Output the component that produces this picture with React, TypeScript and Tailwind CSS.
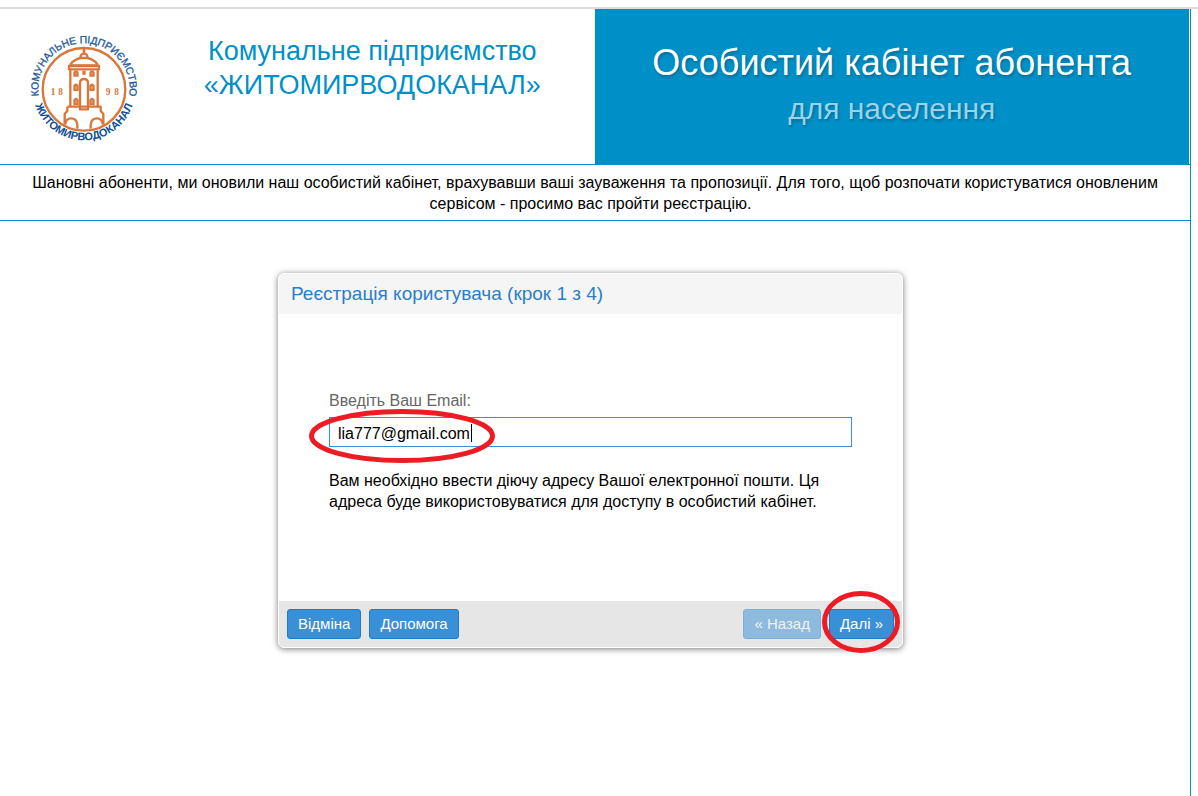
import { useState } from "react";

function Logo() {
  return (
    <svg viewBox="0 0 390 390" className="size-[130px] shrink-0" role="img" aria-label="Житомирводоканал">
      <defs>
        <path id="arc-top" d="M77 281 A137 137 0 1 1 307 281" />
        <path id="arc-bottom" d="M43 168 A154 154 0 1 0 341 168" />
      </defs>
      <circle cx="192" cy="208" r="124" fill="none" stroke="#d9773a" strokeWidth="7" />
      <g fontFamily="'Liberation Sans', Arial, sans-serif" fill="#1f5c9e" textAnchor="middle">
        <text fontSize="31" stroke="#1f5c9e" strokeWidth="1">
          <textPath href="#arc-top" startOffset="50%">КОМУНАЛЬНЕ ПІДПРИЄМСТВО</textPath>
        </text>
        <text fontSize="33" fontWeight="bold" fill="#0f4f96">
          <textPath href="#arc-bottom" startOffset="50%">ЖИТОМИРВОДОКАНАЛ</textPath>
        </text>
      </g>
      <g fill="#d9773a" fontFamily="'Liberation Serif', serif" fontSize="28" fontWeight="bold">
        <text x="92" y="225">1</text>
        <text x="115" y="225">8</text>
        <text x="257" y="225">9</text>
        <text x="283" y="225">8</text>
      </g>
      <g fill="none" stroke="#d9773a" strokeWidth="7" strokeLinejoin="round">
        <path d="M192 86 V102" strokeWidth="8" />
        <path d="M181 116 Q181 101 192 101 Q203 101 203 116" />
        <path d="M151 136 Q154 126 166 120 Q174 116 182 114 H202 Q210 116 218 120 Q230 126 233 136 Z" />
        <path d="M147 138 H237 V148 H147 Z" />
        <path d="M151 148 V262 M233 148 V262" />
        <path d="M142 260 H242 V272 L250 282 V314 M142 260 V272 L134 282 V314" />
        <path d="M180 268 V190 Q180 177 192 177 Q204 177 204 190 V268 Z" />
        <path d="M136 312 Q138 295 153 295 Q170 295 172 314 V326 M248 312 Q246 295 231 295 Q214 295 212 314 V326" />
      </g>
      <g fill="#d9773a">
        <path d="M160 170 v-14 q8 -10 16 0 v14z M208 170 v-14 q8 -10 16 0 v14z M187 152 h10 v12 h-10z" />
        <path d="M160 213 v-17 q8 -11 16 0 v17z M208 213 v-17 q8 -11 16 0 v17z" />
        <path d="M160 256 v-17 q8 -11 16 0 v17z M208 256 v-17 q8 -11 16 0 v17z" />
      </g>
      <path
        d="M168 158 v6 M216 158 v6 M168 198 v9 M216 198 v9 M168 241 v9 M216 241 v9"
        stroke="#eeb48f"
        strokeWidth="3"
      />
    </svg>
  );
}

const buttonBase =
  "h-[30px] rounded-[3px] border border-[#1c7cc9] bg-[#3990d6] px-2.5 text-[15px] leading-7 text-white";

export default function App() {
  const [email, setEmail] = useState("lia777@gmail.com");

  return (
    <div className="min-h-screen bg-white pt-[7px] font-['Liberation_Sans',Arial,sans-serif] text-base leading-[21px] text-black">
      <div className="h-0.5 bg-[#dadce0]" />
      <div className="mr-[7px] min-h-[calc(100vh-9px)] border-r border-[#0090c8]">
        <header className="mr-px flex h-[155px]">
          <div className="flex w-1/2 items-start">
            <div className="pt-[11px] pl-5">
              <Logo />
            </div>
            <h1 className="grow pt-[25px] text-center text-[27px] leading-[34px] text-[#0090c8]">
              Комунальне підприємство
              <br />
              «ЖИТОМИРВОДОКАНАЛ»
            </h1>
          </div>
          <div className="w-1/2 bg-[#0090c8] pt-[30px] text-center text-white [text-shadow:1px_2px_3px_#0004]">
            <h2 className="text-4xl leading-[48px]">Особистий кабінет абонента</h2>
            <p className="text-[30px] leading-[44px] text-[#99d3e9]">для населення</p>
          </div>
        </header>
        <p className="border-y border-[#0090c8] px-5 pt-[7px] pb-1.5 text-center">
          Шановні абоненти, ми оновили наш особистий кабінет, врахувавши ваші зауваження та пропозиції. Для того, щоб
          розпочати користуватися оновленим сервісом - просимо вас пройти реєстрацію.&nbsp;&nbsp;
        </p>
        <main className="pt-[52px] pr-[9px]">
          <form
            className="mx-auto max-w-[625px] rounded-md border border-white bg-white shadow-[0_1px_6px_#0008]"
            onSubmit={(e) => e.preventDefault()}
          >
            <h2 className="rounded-t-[5px] bg-[#f5f5f5] px-3 text-[19px] leading-10 text-[#2a7fcb]">
              Реєстрація користувача (крок 1 з 4)
            </h2>
            <div className="px-[50px] pt-[76px] pb-[89px]">
              <label htmlFor="email" className="block text-[#666]">
                Введіть Ваш Email:
              </label>
              <div className="relative mt-1.5">
                <input
                  id="email"
                  type="email"
                  value={email}
                  onChange={(e) => setEmail(e.target.value)}
                  className="block h-[30px] w-full border border-[#3990d6] px-2 pt-1 text-base outline-none"
                />
                <span className="absolute top-[7px] left-[142px] h-[18px] w-px bg-black" />
                <svg
                  viewBox="0 0 186 54"
                  className="pointer-events-none absolute -top-2 -left-5 h-[54px] w-[186px]"
                  aria-hidden="true"
                >
                  <ellipse cx="93" cy="27" rx="90.5" ry="24.5" fill="none" stroke="#ed1c24" strokeWidth="5" />
                </svg>
              </div>
              <p className="mt-[23px]">
                Вам необхідно ввести діючу адресу Вашої електронної пошти. Ця адреса буде використовуватися для доступу
                в особистий кабінет.
              </p>
            </div>
            <div className="flex items-center gap-2 rounded-b-[5px] bg-[#e6e6e6] p-2">
              <button type="button" className={buttonBase}>
                Відміна
              </button>
              <button type="button" className={buttonBase}>
                Допомога
              </button>
              <button type="button" disabled className={`${buttonBase} ml-auto opacity-50`}>
                « Назад
              </button>
              <div className="relative">
                <button type="submit" className={buttonBase}>
                  Далі »
                </button>
                <svg
                  viewBox="0 0 78 62"
                  className="pointer-events-none absolute -top-[18px] -right-1.5 h-[62px] w-[78px]"
                  aria-hidden="true"
                >
                  <ellipse cx="39" cy="31" rx="36.5" ry="28.5" fill="none" stroke="#ed1c24" strokeWidth="5" />
                </svg>
              </div>
            </div>
          </form>
        </main>
      </div>
    </div>
  );
}
